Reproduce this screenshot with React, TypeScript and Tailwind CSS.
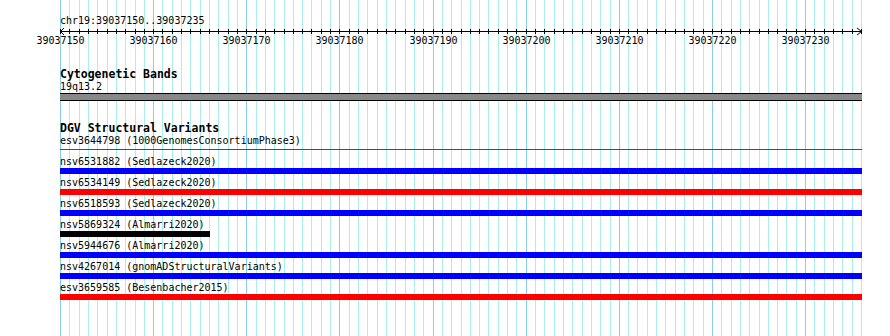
import React from "react";

// view: chr19:39037150..39037235, 86 bases drawn over 801px starting at x=60
const LEFT = 60;
const BASES = 86;
const SPAN = 801;
const START = 39037150;

const xs = Array.from({ length: BASES + 1 }, (_, i) =>
  Math.round(LEFT + (i * SPAN) / BASES)
);

type Variant = {
  id: string;
  study: string;
  color: string;
  width?: string;
  thin?: boolean;
};

const variants: Variant[] = [
  { id: "esv3644798", study: "1000GenomesConsortiumPhase3", color: "bg-[#ff0000]", thin: true },
  { id: "nsv6531882", study: "Sedlazeck2020", color: "bg-[#0000ff]" },
  { id: "nsv6534149", study: "Sedlazeck2020", color: "bg-[#ff0000]" },
  { id: "nsv6518593", study: "Sedlazeck2020", color: "bg-[#0000ff]" },
  { id: "nsv5869324", study: "Almarri2020", color: "bg-black", width: "w-[150px]" },
  { id: "nsv5944676", study: "Almarri2020", color: "bg-[#0000ff]" },
  { id: "nsv4267014", study: "gnomADStructuralVariants", color: "bg-[#0000ff]" },
  { id: "esv3659585", study: "Besenbacher2015", color: "bg-[#ff0000]" },
];

const Grid = () => (
  <svg
    className="absolute left-0 top-0"
    width={890}
    height={336}
    shapeRendering="crispEdges"
  >
    {xs.map((x, i) => (
      <rect
        key={i}
        x={x}
        y={0}
        width={1}
        height={336}
        fill={i % 10 === 0 ? "#88ccee" : "#aaeeee"}
      />
    ))}
  </svg>
);

const Ruler = () => (
  <svg className="block" width={890} height={21}>
    <g shapeRendering="crispEdges">
      <rect x={LEFT} y={4} width={802} height={1} fill="#000" />
      {xs.map((x, i) => (
        <rect key={i} x={x} y={2} width={1} height={5} fill="#000" />
      ))}
    </g>
    <path d="M64 1 L60.5 4.5 L64 8" fill="none" stroke="#000" strokeWidth={1} />
    <path d="M857 1 L861.5 4.5 L857 8" fill="none" stroke="#000" strokeWidth={1} />
    {xs
      .filter((_, i) => i % 10 === 0 && i < BASES)
      .map((x, k) => (
        <text
          key={k}
          x={x + 0.5}
          y={17}
          textAnchor="middle"
          fontSize={10}
          fontFamily="'DejaVu Sans Mono', monospace"
          fill="#000"
        >
          {START + k * 10}
        </text>
      ))}
  </svg>
);

const TrackTitle = ({ children }: { children: React.ReactNode }) => (
  <div className="h-[13px] text-[11.5px] leading-[13px] font-bold text-black">
    {children}
  </div>
);

const Label = ({ children }: { children: React.ReactNode }) => (
  <div className="h-[12px] text-[10px] leading-[12px] whitespace-pre text-black">
    {children}
  </div>
);

export default function App() {
  return (
    <div className="relative w-[890px] h-[336px] overflow-hidden bg-white font-['DejaVu_Sans_Mono',monospace]">
      <Grid />

      <div className="relative">
        <div className="pl-[60px] pt-[15px]">
          <Label>chr19:39037150..39037235</Label>
        </div>
        <Ruler />

        {/* cytogenetic bands */}
        <div className="pl-[60px] pt-[20px]">
          <TrackTitle>Cytogenetic Bands</TrackTitle>
          <Label>19q13.2</Label>
          <div className="w-[802px] h-[8px] bg-[#888888] border-y border-black" />
        </div>

        {/* DGV structural variants */}
        <div className="pl-[60px] pt-[21px]">
          <TrackTitle>DGV Structural Variants</TrackTitle>
          {variants.map((v) => (
            <div key={v.id} className={v.thin ? "h-[21px]" : "h-[21px]"}>
              <Label>
                {v.id} ({v.study})
              </Label>
              {v.thin ? (
                <div className={`mt-[2px] w-[802px] h-px ${v.color}`} />
              ) : (
                <div className={`${v.width ?? "w-[802px]"} h-[6px] ${v.color}`} />
              )}
            </div>
          ))}
        </div>
      </div>
    </div>
  );
}
